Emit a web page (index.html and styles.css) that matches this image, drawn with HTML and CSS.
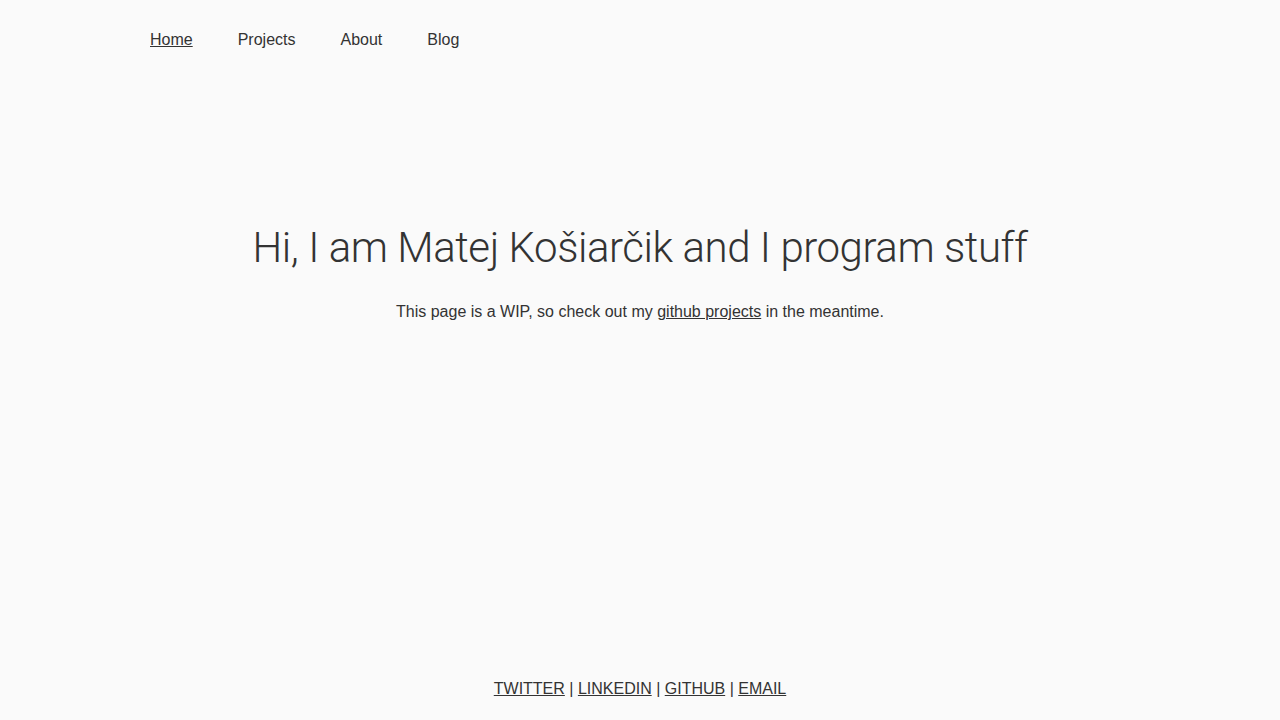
FILE: index.html
```html
<!DOCTYPE html>
<html lang="en">
<head>
<meta charset="utf-8">
<title>Matej Košiarčik</title>
<link rel="stylesheet" href="styles.css">
</head>
<body>
<div class="page">
  <header class="nav">
    <a class="nav-link" href="#">Home</a>
    <a class="nav-link plain" href="#">Projects</a>
    <a class="nav-link plain" href="#">About</a>
    <a class="nav-link plain" href="#">Blog</a>
  </header>
  <main class="hero">
    <h1 class="title">Hi, I am Matej Košiarčik and I program stuff</h1>
    <p class="lead">This page is a WIP, so check out my <a href="#">github projects</a> in the meantime.</p>
  </main>
  <footer class="footer">
    <a href="#">TWITTER</a> | <a href="#">LINKEDIN</a> | <a href="#">GITHUB</a> | <a href="#">EMAIL</a>
  </footer>
</div>
</body>
</html>
```
FILE: styles.css
```css
html, body {
  margin: 0;
  padding: 0;
  background: #fafafa;
  color: #333;
  font-family: "Liberation Sans", Arial, sans-serif;
  font-size: 16px;
}
a { color: #333; }
.page {
  display: flex;
  flex-direction: column;
  min-height: 720px;
}
.nav {
  width: 1000px;
  margin: 0 auto;
  display: flex;
  align-items: center;
  height: 80px;
  box-sizing: border-box;
}
.nav-link {
  margin-left: 10px;
  margin-right: 35px;
  line-height: 20px;
}
.nav-link.plain { text-decoration: none; }
.hero {
  flex: 1;
  text-align: center;
  padding-top: 143px;
}
.title {
  margin: 0;
  font-family: "Roboto", "Liberation Sans", sans-serif;
  font-weight: 300;
  font-size: 42px;
  line-height: 50px;
  letter-spacing: -0.45px;
}
.lead {
  margin: 29px 0 0;
  line-height: 20px;
}
.footer {
  text-align: center;
  line-height: 20px;
  padding-bottom: 21px;
}
```
